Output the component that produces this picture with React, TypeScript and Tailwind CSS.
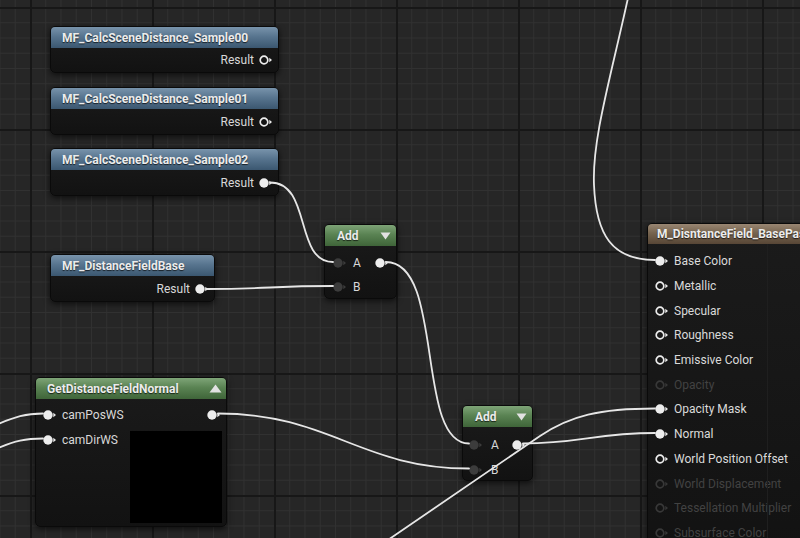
import React from "react";

type PinKind = "filled" | "hollow" | "dim" | "gray";

function Pin({ kind }: { kind: PinKind }) {
  const color = kind === "dim" ? "#383838" : kind === "gray" ? "#3c3c3c" : "#ededed";
  return (
    <svg width="14" height="12" viewBox="0 0 14 12" className="shrink-0">
      {kind === "filled" || kind === "gray" ? (
        <circle cx="5" cy="6" r="4.7" fill={color} />
      ) : (
        <circle cx="5" cy="6" r="3.8" fill="none" stroke={color} strokeWidth="1.7" />
      )}
      <polygon points="10.3,3.8 13,6 10.3,8.2" fill={color} />
    </svg>
  );
}

const blueHdr =
  "bg-[linear-gradient(to_bottom,#7893ab_0%,#58758f_45%,#3b5770_100%)]";
const greenHdr =
  "bg-[linear-gradient(to_bottom,#7ea477_0%,#5a8353_45%,#3f6539_100%)]";
const brownHdr =
  "bg-[linear-gradient(to_bottom,#998672_0%,#76644f_45%,#574636_100%)]";

const nodeBase =
  "absolute flex flex-col rounded-[5px] bg-[linear-gradient(to_bottom,#1b1b1b,#121212)] border border-[#0a0a0a] shadow-[0_2px_6px_rgba(0,0,0,0.65)] overflow-hidden";
const hdrText =
  "text-[12px] font-bold text-[#ececec] [text-shadow:0_1px_1px_rgba(0,0,0,0.7)] whitespace-nowrap";

function MFNode({ pos, title }: { pos: string; title: string }) {
  return (
    <div className={`${nodeBase} ${pos}`}>
      <div className={`h-[21px] shrink-0 flex items-center pl-[11px] ${blueHdr} ${hdrText}`}>
        {title}
      </div>
      <div className="flex-1 flex items-center justify-end pr-[5px] gap-[5px] text-[12px] text-[#d8d8d8]">
        <span>Result</span>
        <Pin kind={"filled"} />
      </div>
    </div>
  );
}

function MFNodeHollow({ pos, title }: { pos: string; title: string }) {
  return (
    <div className={`${nodeBase} ${pos}`}>
      <div className={`h-[21px] shrink-0 flex items-center pl-[11px] ${blueHdr} ${hdrText}`}>
        {title}
      </div>
      <div className="flex-1 flex items-center justify-end pr-[5px] gap-[5px] text-[12px] text-[#d8d8d8]">
        <span>Result</span>
        <Pin kind={"hollow"} />
      </div>
    </div>
  );
}

function DownTri() {
  return (
    <svg width="11" height="8" viewBox="0 0 11 8">
      <polygon points="0.5,0.5 10.5,0.5 5.5,7.5" fill="#e2e2e2" />
    </svg>
  );
}

function UpTri() {
  return (
    <svg width="13" height="9" viewBox="0 0 13 9">
      <polygon points="0.5,8.5 12.5,8.5 6.5,0.5" fill="#e2e2e2" />
    </svg>
  );
}

const matRows: { label: string; kind: PinKind }[] = [
  { label: "Base Color", kind: "filled" },
  { label: "Metallic", kind: "hollow" },
  { label: "Specular", kind: "hollow" },
  { label: "Roughness", kind: "hollow" },
  { label: "Emissive Color", kind: "hollow" },
  { label: "Opacity", kind: "dim" },
  { label: "Opacity Mask", kind: "filled" },
  { label: "Normal", kind: "filled" },
  { label: "World Position Offset", kind: "hollow" },
  { label: "World Displacement", kind: "dim" },
  { label: "Tessellation Multiplier", kind: "dim" },
  { label: "Subsurface Color", kind: "dim" },
];

const wires = [
  "M 628 -2 C 610 80, 592 140, 594 185 C 596 235, 612 260, 655 260",
  "M 270 182.5 C 312 182.5, 294 262, 333 262",
  "M 206 289 C 270 289, 270 286, 333 286",
  "M 386 262 C 445 262, 415 443.5, 469 443.5",
  "M 218 413.5 C 330 413.5, 360 468.5, 469 468.5",
  "M 523 443.5 C 580 443.5, 595 433, 655 433",
  "M 385 542 L 540 436 C 570 415.6, 600 408.5, 655 408.5",
  "M -2 424 C 15 417, 25 413.5, 43 413.5",
  "M -2 448 C 15 441, 25 438.5, 43 438.5",
];

export default function App() {
  return (
    <div className="relative w-[800px] h-[538px] overflow-hidden font-['Roboto','Noto_Sans',sans-serif] bg-[#262626] bg-[linear-gradient(to_right,#171717_2px,transparent_2px),linear-gradient(to_bottom,#171717_2px,transparent_2px),linear-gradient(to_right,#313131_1px,transparent_1px),linear-gradient(to_bottom,#313131_1px,transparent_1px)] bg-[length:122px_122px,122px_122px,15.25px_15.25px,15.25px_15.25px] bg-[position:30px_7px,30px_7px,30px_7px,30px_7px]">
      <MFNodeHollow pos="left-[50px] top-[26px] w-[229px] h-[47px]" title="MF_CalcSceneDistance_Sample00" />
      <MFNodeHollow pos="left-[50px] top-[87px] w-[229px] h-[48px]" title="MF_CalcSceneDistance_Sample01" />
      <MFNode pos="left-[50px] top-[148px] w-[229px] h-[48px]" title="MF_CalcSceneDistance_Sample02" />
      <MFNode pos="left-[50px] top-[254px] w-[165px] h-[48px]" title="MF_DistanceFieldBase" />

      {/* Add node 1 */}
      <div className={`${nodeBase} left-[324px] top-[224px] w-[73px] h-[75px]`}>
        <div className={`h-[21px] shrink-0 flex items-center justify-between pl-[12px] pr-[5px] ${greenHdr} ${hdrText}`}>
          <span>Add</span>
          <DownTri />
        </div>
        <div className="flex flex-col pt-[5px] text-[12px] text-[#d8d8d8]">
          <div className="h-[24px] flex items-center pl-[8px] pr-[7px]">
            <Pin kind="gray" />
            <span className="ml-[6px] flex-1">A</span>
            <Pin kind="filled" />
          </div>
          <div className="h-[24px] flex items-center pl-[8px]">
            <Pin kind="gray" />
            <span className="ml-[6px]">B</span>
          </div>
        </div>
      </div>

      {/* Add node 2 */}
      <div className={`${nodeBase} left-[462px] top-[405px] w-[71px] h-[76px]`}>
        <div className={`h-[21px] shrink-0 flex items-center justify-between pl-[12px] pr-[5px] ${greenHdr} ${hdrText}`}>
          <span>Add</span>
          <DownTri />
        </div>
        <div className="flex flex-col pt-[5px] text-[12px] text-[#d8d8d8]">
          <div className="h-[25px] flex items-center pl-[6px] pr-[6px]">
            <Pin kind="gray" />
            <span className="ml-[8px] flex-1">A</span>
            <Pin kind="filled" />
          </div>
          <div className="h-[25px] flex items-center pl-[6px]">
            <Pin kind="gray" />
            <span className="ml-[8px]">B</span>
          </div>
        </div>
      </div>

      {/* GetDistanceFieldNormal */}
      <div className={`${nodeBase} left-[35px] top-[377px] w-[192px] h-[150px]`}>
        <div className={`h-[21px] shrink-0 flex items-center justify-between pl-[11px] pr-[4px] ${greenHdr} ${hdrText}`}>
          <span>GetDistanceFieldNormal</span>
          <UpTri />
        </div>
        <div className="flex-1 flex justify-between pt-[3px] pl-[7px] pr-[4px] text-[12px] text-[#d8d8d8]">
          <div className="flex flex-col">
            <div className="h-[25px] flex items-center gap-[5px]">
              <Pin kind="filled" />
              <span>camPosWS</span>
            </div>
            <div className="h-[25px] flex items-center gap-[5px]">
              <Pin kind="filled" />
              <span>camDirWS</span>
            </div>
          </div>
          <div className="flex flex-col items-end">
            <div className="h-[25px] flex items-center mr-[1px]">
              <Pin kind="filled" />
            </div>
            <div className="mt-[4px] w-[92px] h-[92px] bg-black" />
          </div>
        </div>
      </div>

      {/* Material node */}
      <div className={`${nodeBase} left-[647px] top-[223px] w-[190px] h-[340px]`}>
        <div className={`h-[20px] shrink-0 flex items-center pl-[9px] ${brownHdr} ${hdrText}`}>
          M_DisntanceField_BasePass
        </div>
        <div className="relative flex flex-col pt-[5px] text-[12px]">
          <div className="absolute left-[119px] top-0 h-[330px] w-px bg-[#1f1f1f]" />
          {matRows.map((r) => (
            <div key={r.label} className="h-[24.7px] flex items-center pl-[7px] gap-[5px]">
              <Pin kind={r.kind} />
              <span className={r.kind === "dim" ? "text-[#424242] whitespace-nowrap" : "text-[#dadada] whitespace-nowrap"}>
                {r.label}
              </span>
            </div>
          ))}
        </div>
      </div>

      <svg className="absolute inset-0 pointer-events-none" width="800" height="538" viewBox="0 0 800 538">
        {wires.map((d, i) => (
          <path key={i} d={d} fill="none" stroke="#e6e6e6" strokeWidth="1.8" strokeLinecap="round" />
        ))}
      </svg>
    </div>
  );
}
